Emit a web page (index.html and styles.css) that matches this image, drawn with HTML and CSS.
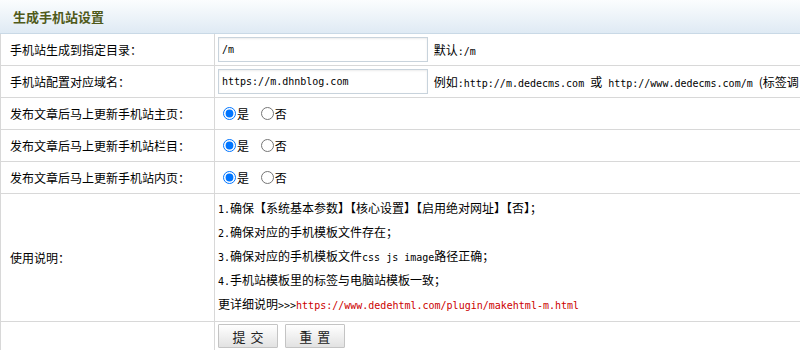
FILE: index.html
```html
<!DOCTYPE html>
<html lang="zh-CN">
<head>
    <meta charset="UTF-8">
    <title>生成手机站设置</title>
    <link rel="stylesheet" href="styles.css">
</head>
<body>
    <div class="panel-title">生成手机站设置</div>

    <form action="#" method="post">
        <table class="setting-table">
            <colgroup>
                <col class="col-label">
                <col>
            </colgroup>
            <tr>
                <td class="label">手机站生成到指定目录：</td>
                <td class="field">
                    <input type="text" class="txt" name="mdir" value="/m">
                    <span class="tip">默认<span class="en">:/m</span></span>
                </td>
            </tr>
            <tr>
                <td class="label">手机站配置对应域名：</td>
                <td class="field">
                    <input type="text" class="txt" name="murl" value="https://m.dhnblog.com">
                    <span class="tip">例如<span class="en">:http://m.dedecms.com </span>或<span class="en"> http://www.dedecms.com/m </span>(标签调</span>
                </td>
            </tr>
            <tr>
                <td class="label">发布文章后马上更新手机站主页：</td>
                <td class="field">
                    <label class="opt"><input type="radio" name="upindex" checked>是</label>
                    <label class="opt"><input type="radio" name="upindex">否</label>
                </td>
            </tr>
            <tr>
                <td class="label">发布文章后马上更新手机站栏目：</td>
                <td class="field">
                    <label class="opt"><input type="radio" name="uplist" checked>是</label>
                    <label class="opt"><input type="radio" name="uplist">否</label>
                </td>
            </tr>
            <tr>
                <td class="label">发布文章后马上更新手机站内页：</td>
                <td class="field">
                    <label class="opt"><input type="radio" name="uparc" checked>是</label>
                    <label class="opt"><input type="radio" name="uparc">否</label>
                </td>
            </tr>
            <tr class="usage-row">
                <td class="label">使用说明：</td>
                <td class="field usage">
                    <p><span class="en">1.</span>确保【系统基本参数】【核心设置】【启用绝对网址】【否】；</p>
                    <p><span class="en">2.</span>确保对应的手机模板文件存在；</p>
                    <p><span class="en">3.</span>确保对应的手机模板文件<span class="en">css js image</span>路径正确；</p>
                    <p><span class="en">4.</span>手机站模板里的标签与电脑站模板一致；</p>
                    <p>更详细说明<span class="en">&gt;&gt;&gt;</span><a class="en link" href="#">https://www.dedehtml.com/plugin/makehtml-m.html</a></p>
                </td>
            </tr>
            <tr class="btn-row">
                <td class="label"></td>
                <td class="field">
                    <button type="submit" class="btn">提 交</button>
                    <button type="reset" class="btn">重 置</button>
                </td>
            </tr>
        </table>
    </form>
</body>
</html>
```

FILE: styles.css
```css
html, body {
    overflow: hidden;
}

body {
    margin: 0;
    font-family: "Noto Sans CJK SC", sans-serif;
    font-size: 12px;
    color: #000;
    background: #fff;
}

.en {
    font-family: "DejaVu Sans Mono", "Liberation Mono", monospace;
    font-size: 10px;
    line-height: 1;
}

/* 标题栏 */
.panel-title {
    width: 1000px;
    height: 33px;
    line-height: 33px;
    padding-left: 13px;
    border-bottom: 1px solid #c9d9e6;
    background: linear-gradient(#fbfdfe, #dfeaf4);
    color: #505a1a;
    font-size: 13px;
    font-weight: bold;
}

form {
    margin: 0;
}

/* 表格比窗口宽, 右侧被裁掉 */
.setting-table {
    border-collapse: collapse;
    table-layout: fixed;
    width: 1000px;
}

.col-label {
    width: 214px;
}

.setting-table td {
    border: 1px solid #d8d8d8;
    height: 31px;
    padding: 0;
    white-space: nowrap;
}

.setting-table tr:first-child td {
    border-top: none;
}

.setting-table td.label {
    padding-left: 9px;
}

.setting-table td.field {
    padding-left: 3px;
}

.txt {
    box-sizing: border-box;
    width: 210px;
    height: 25px;
    margin: 0;
    padding: 0 3px;
    border: 1px solid #c8d3dc;
    box-shadow: inset 0 1px 2px rgba(0, 0, 0, 0.08);
    font-family: "DejaVu Sans Mono", "Liberation Mono", monospace;
    font-size: 10px;
    vertical-align: middle;
}

.tip {
    margin-left: 3px;
    vertical-align: middle;
}

.opt {
    display: inline-flex;
    align-items: center;
    margin-right: 4px;
}

.opt input {
    width: 13px;
    height: 13px;
    margin: 0 1px 0 5px;
}

/* 使用说明 */
.setting-table td.usage {
    padding-top: 2px;
    padding-bottom: 5px;
}

.usage p {
    margin: 0;
    line-height: 24px;
}

.link {
    color: #cc0000;
    text-decoration: none;
}

.btn-row td {
    padding-top: 2px;
    vertical-align: top;
}

.btn {
    width: 60px;
    height: 24px;
    margin: 0 4px 0 0;
    padding: 0;
    border: 1px solid #c4c4c4;
    border-radius: 1px;
    background: linear-gradient(#ffffff, #e2e2e2);
    color: #222;
    font-family: "Noto Sans CJK SC", sans-serif;
    font-size: 13px;
    word-spacing: 2px;
    cursor: pointer;
}
```
